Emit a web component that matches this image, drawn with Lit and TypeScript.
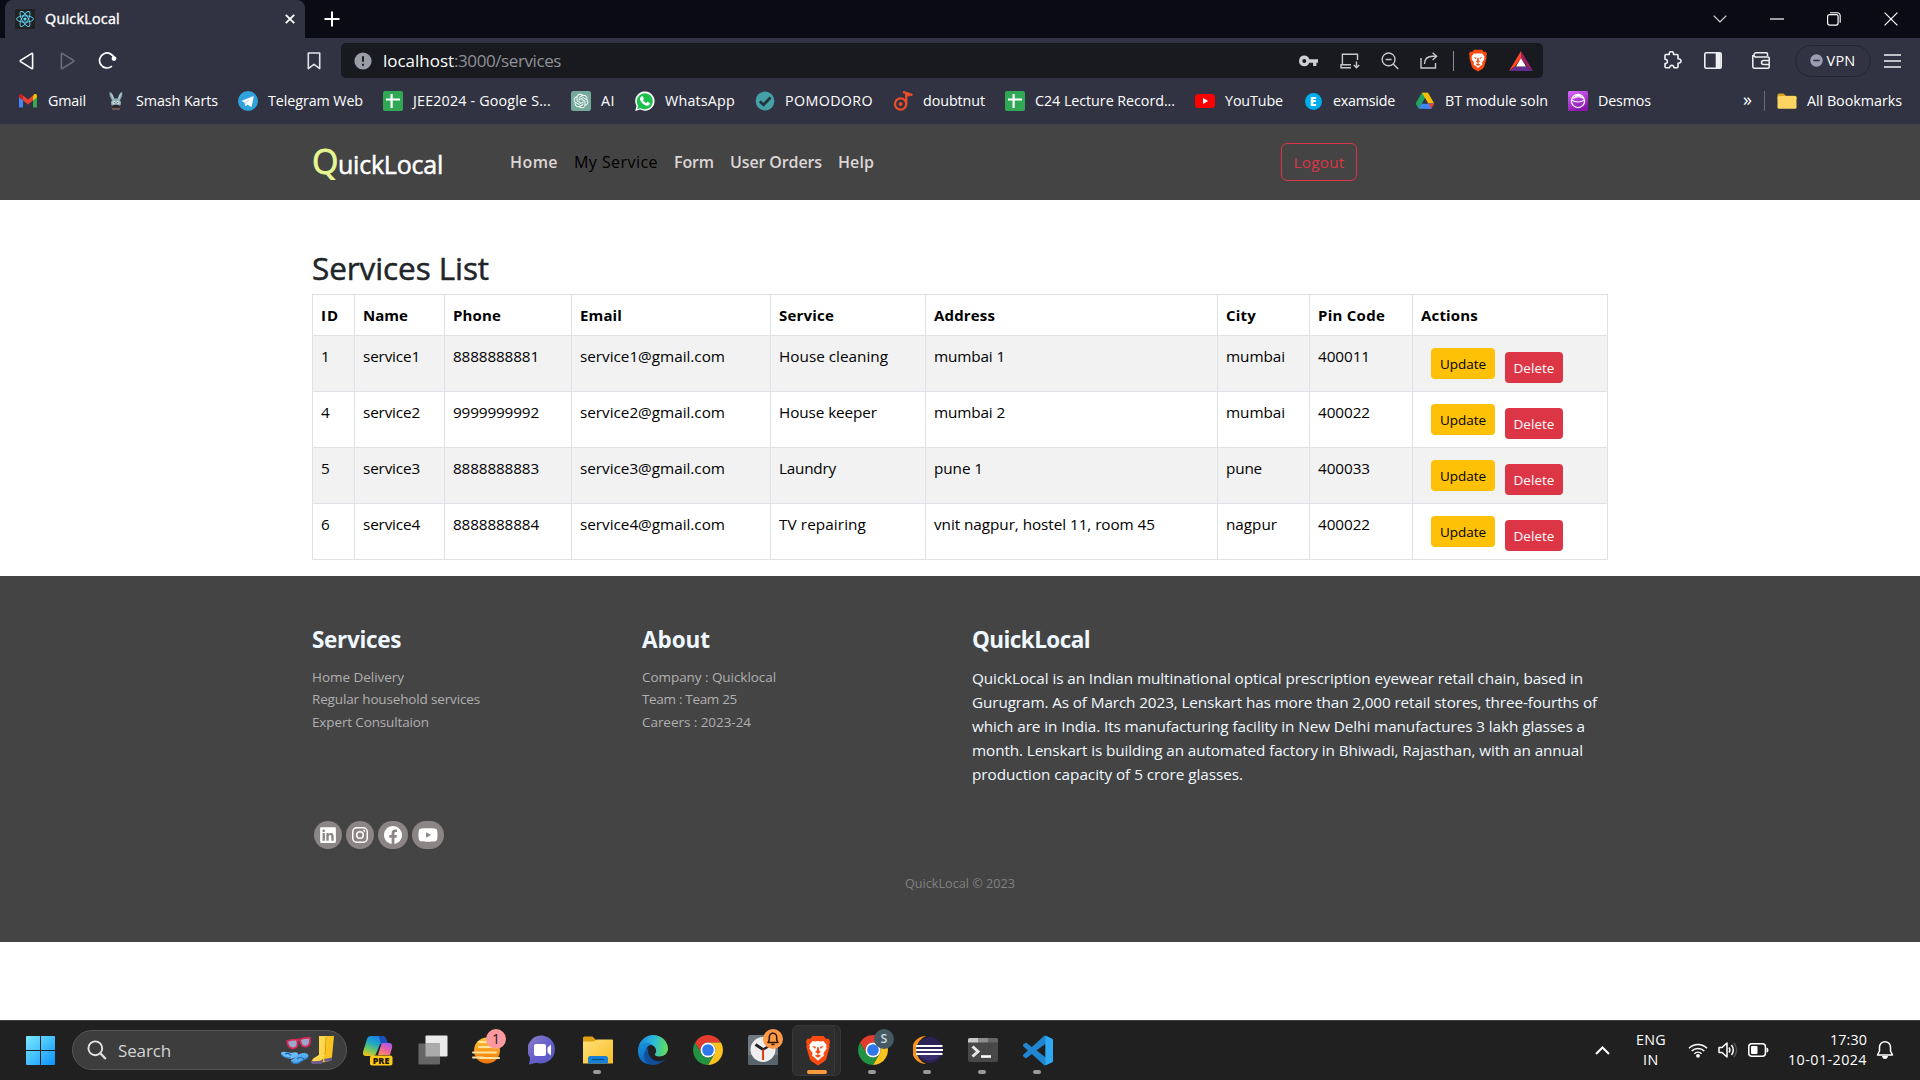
import { LitElement, html, css, svg, nothing, type TemplateResult } from "lit";
import { customElement, property } from "lit/decorators.js";

type Icon = TemplateResult;

/** Inline label whose tracking is adjusted so that it fills a set width. */
@customElement("fit-text")
class FitText extends LitElement {
  @property({ type: Number }) w = 0;
  @property() text = "";

  static styles = css`
    :host { display: inline-block; white-space: pre; flex: none; }
    .t { display: inline-block; }
  `;

  updated() {
    const span = this.renderRoot.querySelector(".t") as HTMLElement;
    span.style.letterSpacing = "0px";
    const natural = span.getBoundingClientRect().width;
    const n = Math.max(1, this.text.length);
    span.style.letterSpacing = `${(this.w - natural) / n}px`;
    this.style.width = `${this.w}px`;
  }

  render() {
    return html`<span class="t">${this.text}</span>`;
  }
}

const fit = (text: string, w: number) => html`<fit-text .text=${text} .w=${w}></fit-text>`;

const pic = (w: number, h: number, vb: string, body: unknown): Icon =>
  html`<svg width=${w} height=${h} viewBox=${vb} fill="none">${body}</svg>`;

/* ---------- browser icons ---------- */

const reactIcon = pic(20, 20, "0 0 20 20", svg`
  <rect width="20" height="20" rx="1" fill="#222"/>
  <g stroke="#61dafb" stroke-width=".9"><ellipse cx="10" cy="10" rx="8.4" ry="3.2"/>
  <ellipse cx="10" cy="10" rx="8.4" ry="3.2" transform="rotate(60 10 10)"/>
  <ellipse cx="10" cy="10" rx="8.4" ry="3.2" transform="rotate(120 10 10)"/></g><circle cx="10" cy="10" r="1.6" fill="#61dafb"/>`);
const closeIcon = pic(10, 10, "0 0 10 10", svg`<path d="M.8.8l8.4 8.4M9.2.8L.8 9.2" stroke="#fff" stroke-width="1.8"/>`);
const plusIcon = pic(16, 16, "0 0 16 16", svg`<path d="M8 .5v15M.5 8h15" stroke="#fff" stroke-width="2"/>`);
const winDown = pic(14, 8, "0 0 14 8", svg`<path d="M.7.7L7 7 13.3.7" stroke="#ddd" stroke-width="1.2"/>`);
const winMin = pic(14, 2, "0 0 14 2", svg`<path d="M0 1h14" stroke="#fff" stroke-width="1.2"/>`);
const winRestore = pic(14, 14, "0 0 14 14", svg`<rect x=".6" y="2.6" width="10.5" height="10.5" rx="2" stroke="#fff" stroke-width="1.2"/><path d="M3 .8h7.2a3 3 0 0 1 3 3v7" stroke="#fff" stroke-width="1.1"/>`);
const winClose = pic(14, 14, "0 0 14 14", svg`<path d="M.6.6l12.8 12.8M13.4.6L.6 13.4" stroke="#fff" stroke-width="1.2"/>`);

const backIcon = pic(15, 18, "0 0 15 18", svg`<path d="M12.8 1.4Q13.6 1 13.6 2v14q0 1-.8.6L1.6 9.6q-.8-.6 0-1.2z" stroke="#fff" stroke-width="1.6"/>`);
const fwdIcon = pic(15, 18, "0 0 15 18", svg`<path d="M2.2 1.4Q1.4 1 1.4 2v14q0 1 .8.6l11.2-7q.8-.6 0-1.2z" stroke="#6e707c" stroke-width="1.5"/>`);
const reloadIcon = pic(19, 19, "0 0 19 19", svg`<path d="M13.9 15.2A7.5 7.5 0 1 1 16.2 7.3" stroke="#fff" stroke-width="1.7"/><circle cx="16" cy="7.6" r="2.4" fill="#fff"/>`);
const markIcon = pic(14, 18, "0 0 14 18", svg`<path d="M1.3 1h11.4v15.6L7 12.4l-5.7 4.2z" stroke="#e4e4e8" stroke-width="1.6" stroke-linejoin="round"/>`);
const infoIcon = pic(18, 18, "0 0 18 18", svg`<circle cx="9" cy="9" r="8.6" fill="#9a9ca6"/><path d="M9 4.2v5.6M9 11.7v2" stroke="#181a20" stroke-width="1.9"/>`);
const keyIcon = pic(20, 12, "0 0 20 12", svg`<path fill-rule="evenodd" d="M5.3.6a5.3 5.3 0 0 1 5 3.6H19v3.6h-1.6V11h-3.3V7.8h-3.8a5.3 5.3 0 1 1-5-7.2zm0 3.4a2 2 0 1 0 0 4 2 2 0 0 0 0-4z" fill="#d0d0d4"/>`);
const installIcon = pic(20, 16, "0 0 20 16", svg`<path d="M11 14.8H1v-3h10M2.4 11.800V1.200H17.500V7" stroke="#c8c8cc" stroke-width="1.4"/><path d="M16.500 8.500v6M13.800 12l2.700 2.800 2.700-2.800" stroke="#c8c8cc" stroke-width="1.4"/>`);
const zoomIcon = pic(18, 18, "0 0 18 18", svg`<circle cx="7.600" cy="7.400" r="6.400" stroke="#c8c8cc" stroke-width="1.4"/><path d="M4.600 7.400h6M12.200 12l5 5" stroke="#c8c8cc" stroke-width="1.5"/>`);
const shareIcon = pic(18, 17, "0 0 18 17", svg`<path d="M1 6v10h14.500v-5" stroke="#c8c8cc" stroke-width="1.4"/><path d="M4.500 12c0-5 3-7.700 8.500-7.700h3.500M12.600.8l4 3.500-4 3.700" stroke="#c8c8cc" stroke-width="1.4"/>`);
const lion = svg`
  <path d="M19.500 3.600L17 .8h-10L4.500 3.600 2.300 3.200.8 6.200l.9 2.500-.5 2 2.900 10.500c.5 1.600 1.300 2.600 2.600 3.500L12 28l5.300-3.300c1.300-.9 2.100-1.900 2.600-3.500l2.900-10.500-.5-2 .9-2.500-1.500-3z" fill="#fb4b13"/>
  <path d="M12 5.400l2.800.6 2.200-.6 3 3.800-.5 1.800.5 1.500-3 4.300.5 2.400-2.600 1.800L12 23.600l-2.900-2.600-2.600-1.800.5-2.400-3-4.300.5-1.500-.5-1.800 3-3.800 2.200.6z" fill="#fff"/>
  <path d="M6.500 10l3.700.9-.7 1.900zM17.500 10l-3.700.9.700 1.900zM9.300 15.600l1.600-1.400.3-3h1.600l.3 3 1.600 1.400-2.700 1.800zM9 19l3-1.300 3 1.300-3 2z" fill="#fb4b13"/>`;
const braveSmall = pic(20, 23, "0 0 24 28.500", lion);
const batIcon = pic(24, 20, "0 0 24 20", svg`<path d="M12 0L0 20l6-4.500 6-8z" fill="#ff4724"/><path d="M12 0l12 20-6-4.500-6-8z" fill="#9e1f63"/><path d="M0 20h24l-6.500-4.500h-11z" fill="#662d91"/><path d="M12 7.200l-5 8.300h10z" fill="#fff"/>`);
const puzzleIcon = pic(19, 19, "0 0 19 19", svg`<path d="M2 4.500q0-1 1-1h3.200c-.3-4 4.600-4 4.400 0H14q1 0 1 1v3.300c4-.2 4 4.600 0 4.400v3.600q0 1-1 1h-3c.2-3.200-4.400-3.200-4.400 0H3q-1 0-1-1v-3.200c3.200.2 3.200-4.600 0-4.400z" stroke="#f0f0f4" stroke-width="1.6" stroke-linejoin="round"/>`);
const sideIcon = pic(18, 17, "0 0 18 17", svg`<rect x=".8" y=".8" width="16.400" height="15.400" rx="1.500" stroke="#f0f0f4" stroke-width="1.600"/><path d="M11.700 1h5v15h-5z" fill="#f0f0f4"/>`);
const walletIcon = pic(18, 17, "0 0 18 17", svg`<path d="M15.500 4V1.800q0-1-1-1H3.200a2.400 2.400 0 0 0 0 4.200H16q1.200 0 1.200 1.200v8.800q0 1.200-1.200 1.200H2.500Q.8 16.200.8 14.500V3M17 8.500h-5.500a2 2 0 0 0 0 4H17" stroke="#f0f0f4" stroke-width="1.500"/>`);
const vpnDot = pic(13, 13, "0 0 13 13", svg`<circle cx="6.500" cy="6.500" r="6.200" fill="#9b9db3"/><path d="M3.300 6.500h6.400" stroke="#313342" stroke-width="1.600"/>`);
const menuIcon = pic(17, 14, "0 0 17 14", svg`<path d="M0 1h17M0 7h17M0 13h17" stroke="#f0f0f4" stroke-width="1.500"/>`);

/* ---------- bookmark icons ---------- */

const gmail = pic(20, 20, "0 0 20 20", svg`<path d="M1 5v10.500q0 1 1 1h3V8.500z" fill="#4285f4"/><path d="M19 5v10.500q0 1-1 1h-3V8.500z" fill="#34a853"/><path d="M15 4.500v5L19 6.300V4.800c0-1.700-1.900-2.300-3-1.400z" fill="#fbbc04"/><path d="M5 9.500l5 4 5-4v-5l-5 4-5-4z" fill="#ea4335"/><path d="M1 4.800v1.500l4 3.200v-5l-1-1.100c-1.100-.9-3-.3-3 1.400z" fill="#c5221f"/>`);
const smash = pic(20, 20, "0 0 20 20", svg`<path d="M3.500.8c2.500 1 4 4 4.800 7h3.400c.8-3 2-6 4.500-7 .8 4-1 7-2.600 9H6.400C4.800 7.800 3 4.800 3.500.8z" fill="#7fa3ad"/><path d="M5 2.500c1.500 1.500 2 3.500 2.300 6zM15 2.500c-1.500 1.500-2 3.500-2.300 6z" stroke="#b4ccd3" stroke-width="1"/><ellipse cx="10" cy="12" rx="5" ry="4.600" fill="#8fb0ba"/><path d="M5.500 15h9l-.8 4h-7.400z" fill="#6d5a58"/><circle cx="8" cy="11.500" r="1.300" fill="#fff"/><circle cx="12" cy="11.500" r="1.300" fill="#fff"/><circle cx="8.200" cy="11.600" r=".6" fill="#111"/><circle cx="11.800" cy="11.600" r=".6" fill="#111"/><path d="M6 14.800q4-2 8 0v2H6z" fill="#2c2226"/>`);
const telegram = pic(20, 20, "0 0 20 20", svg`<circle cx="10" cy="10" r="10" fill="#30a3dc"/><path d="M3.400 9.900L14.800 5.300q1-.3.800.9l-1.900 9q-.3 1-1.200.4l-2.900-2.200-1.500 1.400-.9.2-.7-3.600z" fill="#fff"/><path d="M7.100 14.500l.2-3 5.600-4.300-4.500 4.900z" fill="#b5d5e6"/>`);
const sheet = pic(20, 20, "0 0 20 20", svg`<rect width="20" height="20" rx="2" fill="#31a854"/><path d="M8.600 3v14M3 8.500h14" stroke="#fff" stroke-width="2.200"/>`);
const openai = pic(20, 20, "0 0 20 20", svg`<rect width="20" height="20" rx="2.500" fill="#74aa9c"/><g transform="translate(2.700 2.700) scale(.61)"><path fill="#fff" d="M22.2819 9.8211a5.9847 5.9847 0 0 0-.5157-4.9108 6.0462 6.0462 0 0 0-6.5098-2.9A6.0651 6.0651 0 0 0 4.9807 4.1818a5.9847 5.9847 0 0 0-3.9977 2.9 6.0462 6.0462 0 0 0 .7427 7.0966 5.98 5.98 0 0 0 .511 4.9107 6.051 6.051 0 0 0 6.5146 2.9001A5.9847 5.9847 0 0 0 13.2599 24a6.0557 6.0557 0 0 0 5.7718-4.2058 5.9894 5.9894 0 0 0 3.9977-2.9001 6.0557 6.0557 0 0 0-.7475-7.0729zm-9.022 12.6081a4.4755 4.4755 0 0 1-2.8764-1.0408l.1419-.0804 4.7783-2.7582a.7948.7948 0 0 0 .3927-.6813v-6.7369l2.02 1.1686a.071.071 0 0 1 .038.052v5.5826a4.504 4.504 0 0 1-4.4945 4.4944zm-9.6607-4.1254a4.4708 4.4708 0 0 1-.5346-3.0137l.142.0852 4.783 2.7582a.7712.7712 0 0 0 .7806 0l5.8428-3.3685v2.3324a.0804.0804 0 0 1-.0332.0615L9.74 19.9502a4.4992 4.4992 0 0 1-6.1408-1.6464zM2.3408 7.8956a4.485 4.485 0 0 1 2.3655-1.9728V11.6a.7664.7664 0 0 0 .3879.6765l5.8144 3.3543-2.0201 1.1685a.0757.0757 0 0 1-.071 0l-4.8303-2.7865A4.504 4.504 0 0 1 2.3408 7.872zm16.5963 3.8558L13.1038 8.364 15.1192 7.2a.0757.0757 0 0 1 .071 0l4.8303 2.7913a4.4944 4.4944 0 0 1-.6765 8.1042v-5.6772a.79.79 0 0 0-.407-.667zm2.0107-3.0231l-.142-.0852-4.7735-2.7818a.7759.7759 0 0 0-.7854 0L9.409 9.2297V6.8974a.0662.0662 0 0 1 .0284-.0615l4.8303-2.7866a4.4992 4.4992 0 0 1 6.6802 4.66zM8.3065 12.863l-2.02-1.1638a.0804.0804 0 0 1-.038-.0567V6.0742a4.4992 4.4992 0 0 1 7.3757-3.4537l-.142.0805L8.704 5.459a.7948.7948 0 0 0-.3927.6813zm1.0976-2.3654l2.602-1.4998 2.6069 1.4998v2.9994l-2.5974 1.4997-2.6067-1.4997Z"/></g>`);
const whatsapp = pic(20, 20, "0 0 20 20", svg`<path d="M.2 20l1.300-5A9.700 9.700 0 1 1 5.200 18.600z" fill="#fff"/><path d="M2.200 18l.9-3.300a8 8 0 1 1 2.700 2.500z" fill="#1fbf4f"/><path d="M6.700 5.200h1l1.200 2.600-.9 1.300c.8 1.500 1.800 2.300 3.200 3l1.200-1.300 2.500 1.200c.2 1.800-1.400 2.900-3 2.700-3.600-.7-6.300-3.600-6.900-6.400 0-1.400.8-2.600 1.700-3.100z" fill="#fff"/>`);
const pomodoro = pic(20, 20, "0 0 20 20", svg`<circle cx="10" cy="10" r="9.400" fill="#45a0a8"/><path d="M4.800 10.300l3.700 3.500 7-7.300" stroke="#25343d" stroke-width="2.700"/>`);
const doubtnut = pic(20, 20, "0 0 20 20", svg`<circle cx="7.600" cy="13" r="5.600" stroke="#ee4d2a" stroke-width="2.300"/><circle cx="7.600" cy="13" r="1.900" fill="#ee4d2a"/><path d="M13.200 13.500V1.500M10 .9l9.500 3.300M13.200 3.800l3.500.6" stroke="#ee4d2a" stroke-width="2.300"/>`);
const youtube = pic(20, 20, "0 0 20 20", svg`<rect x="0" y="3" width="20" height="14" rx="3.500" fill="#f00"/><path d="M8 7v6l5.200-3z" fill="#fff"/>`);
const examside = html`<span class="exam">E</span>`;
const drive = pic(20, 20, "0 0 20 20", svg`<path d="M7 1.800h6L10 7 4 17.500.8 12.500z" fill="#34a853"/><path d="M7 1.800L10 7l-6.300 10.500L.8 12.500z" fill="#21a464"/><path d="M7 1.800h6l6.200 10.700h-6z" fill="#fbbc04"/><path d="M3.700 17.800l3-5.300h12.500l-3 5.300z" fill="#4285f4"/><path d="M10 7.200L7 12.500h6z" fill="#313342"/><path d="M13.200 12.500h6l-3 5.300z" fill="#ea4335"/><path d="M13.200 12.500l3 5.300H10z" fill="#4285f4"/>`);
const desmos = pic(20, 20, "0 0 20 20", svg`<defs><linearGradient id="dg" x1="0" y1="0" x2=".4" y2="1"><stop stop-color="#da6cff"/><stop offset="1" stop-color="#8a18ae"/></linearGradient></defs><rect width="20" height="20" rx="1.500" fill="url(#dg)"/><circle cx="10" cy="10" r="6.600" stroke="#fff" stroke-width="1.200"/><path d="M3.600 9q6.400 4 12.800 0M4.500 7.500q6-3.500 11.300 0M7 5.500c2-1.600 5-1.600 6.300.2" stroke="#fff" stroke-width="1.200"/>`);
const folder = pic(20, 20, "0 0 20 20", svg`<path d="M.5 4q0-1.500 1.500-1.500h4.500L9 4.800h9q1.500 0 1.500 1.500V8H.5z" fill="#d9a520"/><rect x=".5" y="5" width="19" height="12.800" rx="1.500" fill="#fcd462"/>`);

/* ---------- social icons ---------- */

const linkedin = pic(16, 18, "0 0 448 512", svg`<path fill="#fff" d="M416 32H31.9C14.3 32 0 46.5 0 64.3v383.4C0 465.5 14.3 480 31.9 480H416c17.6 0 32-14.5 32-32.3V64.3c0-17.8-14.4-32.3-32-32.3zM135.400 416H69V202.200h66.500V416zm-33.200-243c-21.300 0-38.500-17.300-38.500-38.500S80.900 96 102.200 96c21.200 0 38.500 17.300 38.500 38.500 0 21.300-17.200 38.500-38.500 38.500zm282.100 243h-66.400V312c0-24.800-.5-56.700-34.500-56.700-34.600 0-39.900 27-39.900 54.900V416h-66.400V202.200h63.700v29.200h.9c8.900-16.800 30.600-34.500 62.900-34.500 67.200 0 79.700 44.300 79.700 101.900V416z"/>`);
const instagram = pic(16, 18, "0 0 16 18", svg`<rect x=".75" y="1.750" width="14.500" height="14.500" rx="4" stroke="#fff" stroke-width="1.500"/><circle cx="8" cy="9" r="3.300" stroke="#fff" stroke-width="1.500"/><circle cx="12.200" cy="4.800" r="1" fill="#fff"/>`);
const facebook = pic(18, 18, "0 0 24 24", svg`<path fill="#fff" d="M24 12.073c0-6.627-5.373-12-12-12s-12 5.373-12 12c0 5.990 4.388 10.954 10.125 11.854v-8.385H7.078v-3.470h3.047V9.430c0-3.007 1.792-4.669 4.533-4.669 1.312 0 2.686.235 2.686.235v2.953H15.830c-1.491 0-1.956.925-1.956 1.874v2.250h3.328l-.532 3.470h-2.796v8.385C19.612 23.027 24 18.062 24 12.073z"/>`);
const youtubeFlat = pic(20, 18, "0 0 576 512", svg`<path fill="#fff" d="M549.655 124.083c-6.281-23.650-24.787-42.276-48.284-48.597C458.781 64 288 64 288 64S117.220 64 74.629 75.486c-23.497 6.322-42.003 24.947-48.284 48.597-11.412 42.867-11.412 132.305-11.412 132.305s0 89.438 11.412 132.305c6.281 23.650 24.787 41.500 48.284 47.821C117.220 448 288 448 288 448s170.780 0 213.371-11.486c23.497-6.321 42.003-24.171 48.284-47.821 11.412-42.867 11.412-132.305 11.412-132.305s0-89.438-11.412-132.305zm-317.510 213.508V175.185l142.739 81.205-142.739 81.201z"/>`);

/* ---------- taskbar icons ---------- */

const startIcon = pic(29, 29, "0 0 29 29", svg`<defs><linearGradient id="wg" gradientUnits="userSpaceOnUse" x1="0" y1="0" x2="29" y2="29"><stop stop-color="#7cebfe"/><stop offset="1" stop-color="#0a93fa"/></linearGradient></defs><path fill="url(#wg)" d="M1 0h13v14H0V1q0-1 1-1zM15 0h13q1 0 1 1v13H15zM0 15h14v14H1q-1 0-1-1zM15 15h14v13q0 1-1 1H15z"/>`);
const searchIcon = pic(20, 20, "0 0 20 20", svg`<circle cx="8.300" cy="8.300" r="6.900" stroke="#e4e4e4" stroke-width="1.900"/><path d="M13.300 13.300l5.500 5.700" stroke="#e4e4e4" stroke-width="2.200"/>`);
const beachIcon = pic(56, 32, "0 0 56 32", svg`
  <g transform="rotate(-8 19 9)"><path d="M7.500 5.500q5-1 10 0 1 8-4.500 8-5.500 0-5.500-8zM20.500 5.500q5-1 10 0 0 8-5 8-5.500 0-5-8z" fill="#9aa8cc" stroke="#d62a57" stroke-width="1.800"/><path d="M17 6h4" stroke="#d62a57" stroke-width="2"/></g>
  <path d="M1 19c3-3 7 1 12-.5 5-1.500 7 2 3 4.500l-5 2C7 24 1 23 1 19z" fill="#6bbcf7"/><path d="M11 26c4-1 4-5 10-6.500 5-1.500 9 1 7 4-1 2-5 2-8 4.500-4 3-10 1-9-2z" fill="#55aef0"/><path d="M1.500 20.500c2 3 6 3.500 9.500 3.500M11.500 27c1 3 6 3 8.500 1l8-5" stroke="#2a78c8" stroke-width="1.200"/><path d="M5 20q4-2 6 1.500M17 25q3-3 7 0" stroke="#1a5fb4" stroke-width="1.200"/>
  <path d="M39 2h15l-2 21q-.3 4-4 4.500L35 30q-5 0-3-4l7-5z" fill="#f9c321"/><path d="M39 2h8l-1 18-5 7h-7q-3-1 0-3l5-3z" fill="#ffd84d"/><path d="M31 27q9 1 12-2v3.500l-2 1.500h-8q-3-1-2-3zM44 25l8-1.500v3l-7 1.500z" fill="#6b5a8e"/><path d="M46 3l-1 18" stroke="#d99a0a" stroke-width="1"/>`);
const copilotIcon = pic(30, 31, "0 0 30 31", svg`<defs><linearGradient id="cg1" x1=".7" y1="0" x2=".2" y2="1"><stop stop-color="#1a78e6"/><stop offset=".4" stop-color="#1fa7c9"/><stop offset=".75" stop-color="#7cc65a"/><stop offset="1" stop-color="#f2c319"/></linearGradient><linearGradient id="cg2" x1=".8" y1="0" x2=".2" y2="1"><stop stop-color="#a05bf0"/><stop offset=".5" stop-color="#e860a8"/><stop offset="1" stop-color="#ff8d5c"/></linearGradient></defs>
  <path d="M8 1h11q3 0 4 3l2 5h-8l-4 10q-1 2-3 2H3q-4 0-2.700-5L4 4q1-3 4-3z" fill="url(#cg1)"/><path d="M16 1h3q3 0 4 3l2 5h-7z" fill="#1b4fc0"/><path d="M20 8h6q4 0 3 5l-2 7H15l3-10q.5-2 2-2z" fill="url(#cg2)"/>
  <rect x="7" y="20.500" width="22.500" height="10" rx="2" fill="#ffc91a"/>`);
const viewIcon = pic(30, 30, "0 0 30 30", svg`<rect x="7.500" y=".5" width="22" height="21" rx="1" fill="#eaeaea"/><rect x=".5" y="8.500" width="21.500" height="21" rx="1" fill="#666" /><path d="M7.500 8.500H22V21.500H7.500z" fill="#ababab"/>`);
const sunIcon = pic(34, 30, "0 0 34 30", svg`<defs><linearGradient id="sg" x1="0" y1="0" x2="0" y2="1"><stop stop-color="#ffc52e"/><stop offset="1" stop-color="#f0730d"/></linearGradient></defs><circle cx="16" cy="15.500" r="13" fill="url(#sg)"/><path d="M8 7h9M8 12h18M2 17.500h23M9 23h19M2 22.500h10" stroke="#ffe3a0" stroke-width="2" stroke-linecap="round"/>`);
const chatIcon = pic(29, 30, "0 0 29 30", svg`<defs><linearGradient id="tg" x1="0" y1="0" x2="1" y2="1"><stop stop-color="#8d7fc0"/><stop offset=".5" stop-color="#6660cc"/><stop offset="1" stop-color="#5257c4"/></linearGradient></defs><path d="M14.500.5a14 14 0 1 1-6 27.200L1 29.500q.8-3 1-7A14 14 0 0 1 14.500.5z" fill="url(#tg)"/><rect x="6" y="9" width="12" height="12" rx="2" fill="#fff"/><path d="M19.500 12.500l3.500-3v11l-3.500-3z" fill="#fff"/>`);
const explorerIcon = pic(30, 28, "0 0 30 28", svg`<defs><linearGradient id="eg" x1="0" y1="0" x2="1" y2="1"><stop stop-color="#ffe07a"/><stop offset="1" stop-color="#f9bd26"/></linearGradient></defs><path d="M0 2Q0 .5 1.500.5h8L13 4v4H0z" fill="#e0a010"/><path d="M0 5.500h11l2.500-2H29q1 0 1 1V27q0 .5-.5.500H0z" fill="url(#eg)"/><path d="M5 27.500v-5q0-2.500 2.500-2.500h15q2.500 0 2.500 2.500v5z" fill="#1580d4"/><path d="M9 23.500h12" stroke="#0b4f8a" stroke-width="1.200"/>`);
const edgeIcon = pic(30, 30, "0 0 30 30", svg`<defs><linearGradient id="ed1" x1="0" y1=".3" x2="1" y2=".4"><stop stop-color="#1c86d8"/><stop offset=".5" stop-color="#2bb9de"/><stop offset="1" stop-color="#62de56"/></linearGradient><linearGradient id="ed2" x1="0" y1="0" x2=".5" y2="1"><stop stop-color="#1697e0"/><stop offset="1" stop-color="#0c62b8"/></linearGradient></defs>
  <path d="M.4 12C2 5 8 0 15 0c9 0 15 7 15 13.500 0 5-4 8-8.500 8-3.500 0-5.300-1.200-4.300-2.800 1.500-2 1.300-5-1-7.200C11 7 3 8 .4 12z" fill="url(#ed1)"/>
  <path d="M.4 12C3 7.500 9.500 6.500 14 9.500c-4 .5-6.500 4-5.800 8.500.8 5.500 6.500 9.500 12.300 8.500C11 33-1 28 0 14.500z" fill="url(#ed2)"/><path d="M10.500 13c-2 6 3 13 10 13.500 3 0 5.500-1.300 7-3.200-3 5-10.500 8-16 6C4 26.500 4.500 15.500 10.500 13z" fill="#114f9c"/>`);
const chromeBody = svg`<path d="M24 14H41.320A20 20 0 0 0 6.680 14L15.340 29A10 10 0 0 1 24 14z" fill="#e33b2e"/><path d="M32.660 29L24 44A20 20 0 0 0 41.320 14H24A10 10 0 0 1 32.660 29z" fill="#fcc31e"/><path d="M15.340 29L6.680 14A20 20 0 0 0 24 44L32.660 29A10 10 0 0 1 15.340 29z" fill="#229342"/><circle cx="24" cy="24" r="10" fill="#fff"/><circle cx="24" cy="24" r="7.800" fill="#3079ea"/>`;
const chromeIcon = pic(30, 30, "4 4 40 40", chromeBody);
const clockIcon = pic(30, 30, "0 0 30 30", svg`<rect y="0" width="30" height="30" rx="2" fill="#6f7982"/><path d="M0 20h30v8q0 2-2 2H2q-2 0-2-2z" fill="#59636c"/><circle cx="15" cy="14.500" r="12.500" fill="#eee"/><path d="M15 14.500L7.500 9.500" stroke="#222" stroke-width="2.800"/><path d="M15 14.500l7-4" stroke="#222" stroke-width="2.500"/><path d="M15 14.500V25" stroke="#dc3c14" stroke-width="2"/>`);
const bellMini = pic(12, 14, "0 0 12 14", svg`<path d="M1 10.500h10L9.700 8V5a3.700 3.700 0 0 0-7.400 0v3zM4.500 12.500h3" stroke="#2a1604" stroke-width="1.500" stroke-linejoin="round"/>`);
const braveIcon = pic(26, 31, "0 0 24 28.500", lion);
const eclipseIcon = pic(30, 28, "0 0 30 28", svg`<path d="M13 0A14 14 0 0 0 13 28 15 15 0 0 1 13 0z" fill="#f7941e"/><circle cx="16.500" cy="14" r="13" fill="#2c2255"/><path d="M4 15h25a13 13 0 0 1-25 0z" fill="#3b2d70"/><path d="M3 10h26.500M3 14h27M3 18h26.500" stroke="#fff" stroke-width="1.900"/>`);
const termIcon = pic(30, 24, "0 0 30 24", svg`<rect width="30" height="24" rx="2" fill="#484848"/><path d="M0 4.500V2q0-2 2-2h8v4.500z" fill="#c8c8c8"/><path d="M10 0h10v4.500H10z" fill="#8c8c8c"/><path d="M20 0h8q2 0 2 2v2.500H20z" fill="#666"/><path d="M4.500 8.500l5.500 5-5.500 5" stroke="#e6e6e6" stroke-width="3"/><path d="M13 18.500h10" stroke="#fff" stroke-width="2.600"/>`);
const codeIcon = pic(30, 31, "0 0 24 24", svg`<path fill="#1f86cf" d="M23.150 2.587L18.210.21a1.494 1.494 0 0 0-1.705.29l-9.460 8.630-4.120-3.128a.999.999 0 0 0-1.276.057L.327 7.261A1 1 0 0 0 .326 8.740L3.899 12 .326 15.260a1 1 0 0 0 .001 1.479L1.650 17.940a.999.999 0 0 0 1.276.057l4.120-3.128 9.460 8.630a1.492 1.492 0 0 0 1.704.290l4.942-2.377A1.500 1.500 0 0 0 24 20.060V3.939a1.500 1.500 0 0 0-.850-1.352zm-5.146 14.861L10.826 12l7.178-5.448v10.896z"/><path fill="#2eaaf4" d="M18 .2l5.200 2.400q.8.400.8 1.300v16.200q0 .9-.8 1.300L18 23.800z"/>`);
const upIcon = pic(15, 9, "0 0 15 9", svg`<path d="M1 8l6.500-6.500L14 8" stroke="#fff" stroke-width="2"/>`);
const wifiIcon = pic(20, 16, "0 0 20 16", svg`<g stroke="#fff" stroke-width="1.500"><path d="M1 6.200a12.700 12.700 0 0 1 18 0M3.700 9a8.900 8.900 0 0 1 12.600 0M6.400 11.700a5.200 5.200 0 0 1 7.200 0"/></g><circle cx="10" cy="13.800" r="1.900" fill="#fff"/>`);
const volIcon = pic(20, 18, "0 0 20 18", svg`<path d="M1 6.500h3L9 2v14l-5-4.500H1z" stroke="#fff" stroke-width="1.500" stroke-linejoin="round"/><path d="M11 6.500q1.800 2.500 0 5M13.500 4q3.600 5 0 10" stroke="#fff" stroke-width="1.500"/><path d="M16 1.800q5 7.200 0 14.400" stroke="#555" stroke-width="1.400"/>`);
const batteryIcon = pic(21, 14, "0 0 21 14", svg`<rect x=".8" y=".8" width="16.600" height="12.400" rx="3" stroke="#fff" stroke-width="1.500"/><rect x="3" y="3" width="6.500" height="8" rx="1" fill="#fff"/><path d="M18.500 4.500q2 0 2 2.500t-2 2.500z" fill="#fff"/>`);
const bellIcon = pic(18, 20, "0 0 18 20", svg`<path d="M1.500 15h15l-2-4V7.200a5.500 5.500 0 0 0-11 0V11z" stroke="#fff" stroke-width="1.500" stroke-linejoin="round"/><path d="M6 16q.5 3 3 3t3-3z" fill="#fff"/>`);

/* ---------- data ---------- */

const bookmarks: [Icon, string, number][] = [
  [gmail, "Gmail", 38], [smash, "Smash Karts", 82], [telegram, "Telegram Web", 95],
  [sheet, "JEE2024 - Google S...", 138], [openai, "AI", 14], [whatsapp, "WhatsApp", 70],
  [pomodoro, "POMODORO", 88], [doubtnut, "doubtnut", 62], [sheet, "C24 Lecture Record...", 140],
  [youtube, "YouTube", 58], [examside, "examside", 62], [drive, "BT module soln", 103], [desmos, "Desmos", 53],
];

const headings: [string, number][] = [
  ["ID", 18], ["Name", 45], ["Phone", 48], ["Email", 42], ["Service", 55],
  ["Address", 61], ["City", 30], ["Pin Code", 67], ["Actions", 57],
];

const rows: [string, number][][] = [
  [["1", 9], ["service1", 57], ["8888888881", 86], ["service1@gmail.com", 145], ["House cleaning", 109], ["mumbai 1", 71], ["mumbai", 59], ["400011", 52]],
  [["4", 9], ["service2", 57], ["9999999992", 86], ["service2@gmail.com", 145], ["House keeper", 98], ["mumbai 2", 71], ["mumbai", 59], ["400022", 52]],
  [["5", 9], ["service3", 57], ["8888888883", 86], ["service3@gmail.com", 145], ["Laundry", 57], ["pune 1", 49], ["pune", 36], ["400033", 52]],
  [["6", 9], ["service4", 57], ["8888888884", 86], ["service4@gmail.com", 145], ["TV repairing", 87], ["vnit nagpur, hostel 11, room 45", 221], ["nagpur", 51], ["400022", 52]],
];

const about: [string, number][] = [
  ["QuickLocal is an Indian multinational optical prescription eyewear retail chain, based in", 611],
  ["Gurugram. As of March 2023, Lenskart has more than 2,000 retail stores, three-fourths of", 625],
  ["which are in India. Its manufacturing facility in New Delhi manufactures 3 lakh glasses a", 613],
  ["month. Lenskart is building an automated factory in Bhiwadi, Rajasthan, with an annual", 611],
  ["production capacity of 5 crore glasses.", 271],
];

type App = { icon: Icon; state?: "run" | "active"; badge?: TemplateResult };
const apps: App[] = [
  { icon: copilotIcon, badge: html`<span class="pre">PRE</span>` },
  { icon: viewIcon },
  { icon: sunIcon, badge: html`<span class="badge pink">1</span>` },
  { icon: chatIcon },
  { icon: explorerIcon, state: "run" },
  { icon: edgeIcon },
  { icon: chromeIcon },
  { icon: clockIcon, badge: html`<span class="badge orange">${bellMini}</span>` },
  { icon: braveIcon, state: "active" },
  { icon: chromeIcon, state: "run", badge: html`<span class="badge slate">S</span>` },
  { icon: eclipseIcon, state: "run" },
  { icon: termIcon, state: "run" },
  { icon: codeIcon, state: "run" },
];

@customElement("browser-chrome")
class BrowserChrome extends LitElement {
  static styles = css`
    :host { display: block; height: 124px; background: #313342; color: #fff; font-size: 14.300px; }
    svg { display: block; flex: none; }
    .tabs { height: 38px; background: #0b0b15; display: flex; align-items: flex-end; padding-left: 5px; }
    .tab { width: 300px; height: 38px; background: #313342; border-radius: 8px 8px 0 0; display: flex; align-items: center; padding: 0 10px; box-sizing: border-box; }
    .tab .name { margin: 0 0 2px 10px; flex: 1; -webkit-text-stroke: .4px #fff; }
    .plus { margin: 0 0 11px 19px; }
    .win { margin-left: auto; height: 38px; display: flex; align-items: center; padding-right: 22px; }
    .win svg + svg { margin-left: 43px; }
    .bar { height: 45px; display: flex; align-items: center; box-sizing: border-box; }
    .back { margin-left: 19px; } .fwd { margin-left: 26px; } .reload { margin-left: 23px; }
    .mark { margin-left: 190px; }
    .url { margin: 0 0 0 20px; width: 1202px; height: 35px; background: #181a20; border-radius: 5px; display: flex; align-items: center; padding: 0 10px 0 13px; box-sizing: border-box; font-size: 17px; }
    .host { margin-left: 11px; height: 24px; line-height: 24px; } .path { color: #8f9196; height: 24px; line-height: 24px; }
    .tools { margin-left: auto; display: flex; align-items: center; }
    .tools > * + * { margin-left: 21px; }
    .tools .rule { width: 1px; height: 20px; background: #8b8c90; margin-left: 15px; }
    .tools .lion { margin-left: 14px; }
    .right { margin-left: auto; display: flex; align-items: center; padding-right: 19px; }
    .right .side { margin-left: 22px; } .right .wallet { margin-left: 30px; }
    .vpn { margin: 0 13px 0 25px; width: 76px; height: 32px; border: 1px solid #24252f; border-radius: 16px; box-sizing: border-box; display: flex; align-items: center; justify-content: center; gap: 4px; padding-right: 1px; font-size: 14.500px; }
    .vpn fit-text { margin-bottom: 1px; }
    .marks { height: 36px; display: flex; align-items: center; padding: 0 18px 0 18px; line-height: 20px; }
    .bm { display: flex; align-items: center; gap: 10px; margin-right: 20px; }
    .bm:last-child { margin-right: 0; }
    .more { margin-left: auto; font-size: 18px; line-height: 18px; padding-bottom: 4px; }
    .rule2 { width: 1px; height: 20px; background: #686a77; margin: 0 12px 0 12px; }
    .exam { width: 17px; height: 17px; margin: 0 1.500px; border-radius: 50%; background: #00adef; font-size: 12px; line-height: 17px; font-weight: 800; text-align: center; }
  `;

  render() {
    return html`
      <div class="tabs">
        <div class="tab">${reactIcon}<span class="name">${fit("QuickLocal", 75)}</span>${closeIcon}</div>
        <span class="plus">${plusIcon}</span>
        <div class="win">${winDown}${winMin}${winRestore}${winClose}</div>
      </div>
      <div class="bar">
        <span class="back">${backIcon}</span><span class="fwd">${fwdIcon}</span><span class="reload">${reloadIcon}</span>
        <span class="mark">${markIcon}</span>
        <div class="url">
          ${infoIcon}<span class="host">${fit("localhost", 71)}</span><span class="path">${fit(":3000/services", 107)}</span>
          <div class="tools">${keyIcon}${installIcon}${zoomIcon}${shareIcon}<span class="rule"></span><span class="lion">${braveSmall}</span>${batIcon}</div>
        </div>
        <div class="right">${puzzleIcon}<span class="side">${sideIcon}</span><span class="wallet">${walletIcon}</span>
          <div class="vpn">${vpnDot}${fit("VPN", 29)}</div>${menuIcon}</div>
      </div>
      <div class="marks">
        ${bookmarks.map(([icon, label, w]) => html`<div class="bm">${icon}${fit(label, w)}</div>`)}
        <span class="more">»</span><span class="rule2"></span>
        <div class="bm">${folder}${fit("All Bookmarks", 95)}</div>
      </div>`;
  }
}

@customElement("site-page")
class SitePage extends LitElement {
  static styles = css`
    :host { display: block; background: #fff; color: #212529; font-size: 15.300px; line-height: 24px; }
    svg { display: block; }
    .wrap { width: 1296px; margin: 0 auto; }
    .nav { background: #444; height: 76px; }
    .nav .wrap { display: flex; align-items: center; height: 76px; }
    .logo { color: #fff; display: flex; align-items: baseline; font-size: 25px; width: 198px; line-height: 40px; height: 42px; -webkit-text-stroke: .5px currentColor; }
    .q { color: #e6f792; font-size: 34px; -webkit-text-stroke: .8px #e6f792; }
    .links { display: flex; gap: 16px; font-weight: 600; color: #ddd6d6; font-size: 16px; padding-bottom: 1px; }
    .links .on { color: #000; font-weight: 400; }
    .logout { margin-left: 407px; width: 76px; height: 38px; border: 1px solid #dc3545; border-radius: 6px; color: #dc3545; display: flex; align-items: center; justify-content: center; box-sizing: border-box; }
    h2 { font-size: 31.500px; font-weight: 400; line-height: 38px; margin: 0; padding: 49px 0 7px; color: #212529; -webkit-text-stroke: .5px #212529; }
    table { border-collapse: collapse; table-layout: fixed; width: 1296px; color: #000; }
    td, th { border: 1px solid #dee2e6; padding: 8px 8px; text-align: left; vertical-align: top; height: 24px; line-height: 24px; box-sizing: content-box; }
    th { font-weight: 700; font-size: 15px; }
    td { height: 39px; }
    tbody tr:nth-child(odd) td { background: #f2f2f2; }
    fit-text { vertical-align: top; }
    .act { padding: 8px 18px; }
    .btns { display: flex; gap: 10px; align-items: flex-start; padding-top: 4px; }
    .btn { height: 31px; border-radius: 4px; display: flex; align-items: center; justify-content: center; font-size: 13.500px; }
    .upd { width: 64px; background: #ffc107; color: #000; }
    .del { width: 58px; background: #dc3545; color: #fff; margin-top: 4px; }
    .foot { background: #444; margin-top: 16px; height: 366px; color: #aaa; }
    .cols { display: grid; grid-template-columns: 330px 330px 636px; padding-top: 49px; height: 179px; }
    h3 { margin: 0; color: #f0f8ff; font-size: 22.500px; line-height: 30px; font-weight: 700; }
    .items { display: flex; flex-direction: column; padding-top: 10.600px; font-size: 13.500px; line-height: 22.500px; color: #b0afaf; }
    .para { display: flex; flex-direction: column; padding-top: 11px; color: #f0f8ff; }
    .social { display: flex; gap: 4px; padding: 17px 0 0 2px; }
    .social span { height: 28px; border-radius: 14px; background: #8b8685; display: flex; align-items: center; justify-content: center; width: 28px; }
    .social .w30 { width: 30px; } .social .w32 { width: 32px; }
    .copy { display: flex; justify-content: center; padding-top: 23px; color: #818181; font-size: 12.600px; }
  `;

  render() {
    const cols = [42, 90, 127, 199, 155, 292, 92, 103, 195];
    return html`
      <div class="nav"><div class="wrap">
        <div class="logo"><span class="q">${fit("Q", 26)}</span>${fit("uickLocal", 105)}</div>
        <div class="links">
          ${fit("Home", 48)}<span class="on">${fit("My Service", 84)}</span>${fit("Form", 40)}${fit("User Orders", 92)}${fit("Help", 36)}
        </div>
        <div class="logout">${fit("Logout", 51)}</div>
      </div></div>
      <div class="wrap">
        <h2>${fit("Services List", 177)}</h2>
        <table>
          <colgroup>${cols.map((w) => html`<col width=${w}>`)}</colgroup>
          <thead><tr>${headings.map(([t, w]) => html`<th>${fit(t, w)}</th>`)}</tr></thead>
          <tbody>${rows.map((r) => html`<tr>${r.map(([t, w]) => html`<td>${fit(t, w)}</td>`)}
            <td class="act"><div class="btns"><span class="btn upd">${fit("Update", 46)}</span><span class="btn del">${fit("Delete", 41)}</span></div></td></tr>`)}
          </tbody>
        </table>
      </div>
      <div class="foot"><div class="wrap">
        <div class="cols">
          <div><h3>${fit("Services", 89)}</h3><div class="items">${fit("Home Delivery", 92)}${fit("Regular household services", 168)}${fit("Expert Consultaion", 117)}</div></div>
          <div><h3>${fit("About", 68)}</h3><div class="items">${fit("Company : Quicklocal", 134)}${fit("Team : Team 25", 95)}${fit("Careers : 2023-24", 109)}</div></div>
          <div><h3>${fit("QuickLocal", 118)}</h3><div class="para">${about.map(([t, w]) => fit(t, w))}</div></div>
        </div>
        <div class="social"><span>${linkedin}</span><span>${instagram}</span><span class="w30">${facebook}</span><span class="w32">${youtubeFlat}</span></div>
        <div class="copy">${fit("QuickLocal © 2023", 110)}</div>
      </div></div>`;
  }
}

@customElement("task-bar")
class TaskBar extends LitElement {
  static styles = css`
    :host { display: flex; align-items: center; height: 60px; background: #202020; border-top: 1px solid #3c4141; padding-bottom: 1px; box-sizing: border-box; color: #fff; font-size: 14.300px; }
    svg { display: block; flex: none; }
    .start { margin-left: 26px; }
    .search { margin-left: 17px; width: 275px; height: 40px; border-radius: 20px; background: #3d3d3d; border: 1px solid #575757; box-sizing: border-box; display: flex; align-items: center; padding: 0 10px 0 14px; font-size: 17px; color: #d4d4d4; }
    .search fit-text { margin-left: 11px; flex: 1; }
    .apps { display: flex; margin-left: 3px; }
    .app { width: 55px; height: 58px; display: flex; align-items: center; justify-content: center; position: relative; }
    .app.run::after, .app.active::after { content: ""; position: absolute; bottom: 5px; left: 23px; width: 8px; height: 4px; border-radius: 2px; background: #9a9a9a; }
    .app.active::after { left: 17px; width: 20px; background: #ff9a3f; }
    .app.active svg { position: relative; }
    .app.active::before { content: ""; position: absolute; left: 2px; top: 4px; width: 43px; height: 51px; border-radius: 6px; background: #2e2e2e; border: 1px solid #393939; box-shadow: 6px 0 0 -1px #2b2b2b, 6px 0 0 0 #363636; box-sizing: border-box; }
    .badge { position: absolute; left: 38px; top: 8px; width: 20px; height: 20px; border-radius: 50%; display: flex; align-items: center; justify-content: center; font-size: 14px; line-height: 20px; }
    .pink { background: #ff99a0; color: #1a1a1a; left: 26px; }
    .orange { background: #ff9a48; left: 28px; }
    .slate { background: #455a64; color: #cfd8dc; font-weight: 600; font-size: 12.500px; left: 29px; }
    .pre { position: absolute; left: 20px; top: 35px; width: 22px; text-align: center; color: #1c1600; font-size: 9px; line-height: 9px; font-weight: 800; }
    .tray { margin-left: auto; display: flex; align-items: center; padding-right: 26px; }
    .lang { display: flex; flex-direction: column; align-items: center; line-height: 20px; margin: 0 22px 0 26px; }
    .tray .vol { margin: 0 10px; }
    .time { display: flex; flex-direction: column; align-items: flex-end; line-height: 20px; margin: 0 9px 0 19px; }
  `;

  render() {
    return html`
      <span class="start">${startIcon}</span>
      <div class="search">${searchIcon}${fit("Search", 53)}${beachIcon}</div>
      <div class="apps">${apps.map((a) => html`<div class="app ${a.state ?? ""}">${a.icon}${a.badge ?? nothing}</div>`)}</div>
      <div class="tray">
        ${upIcon}
        <div class="lang">${fit("ENG", 30)}${fit("IN", 16)}</div>
        ${wifiIcon}<span class="vol">${volIcon}</span>${batteryIcon}
        <div class="time">${fit("17:30", 37)}${fit("10-01-2024", 79)}</div>
        ${bellIcon}
      </div>`;
  }
}

@customElement("app-root")
class AppRoot extends LitElement {
  static styles = css`
    :host { display: flex; flex-direction: column; width: 1920px; height: 1080px; overflow: hidden; background: #fff; font-family: "Open Sans", "Noto Sans", sans-serif; }
    site-page { flex: 1; }
  `;

  render() {
    return html`<browser-chrome></browser-chrome><site-page></site-page><task-bar></task-bar>`;
  }
}
